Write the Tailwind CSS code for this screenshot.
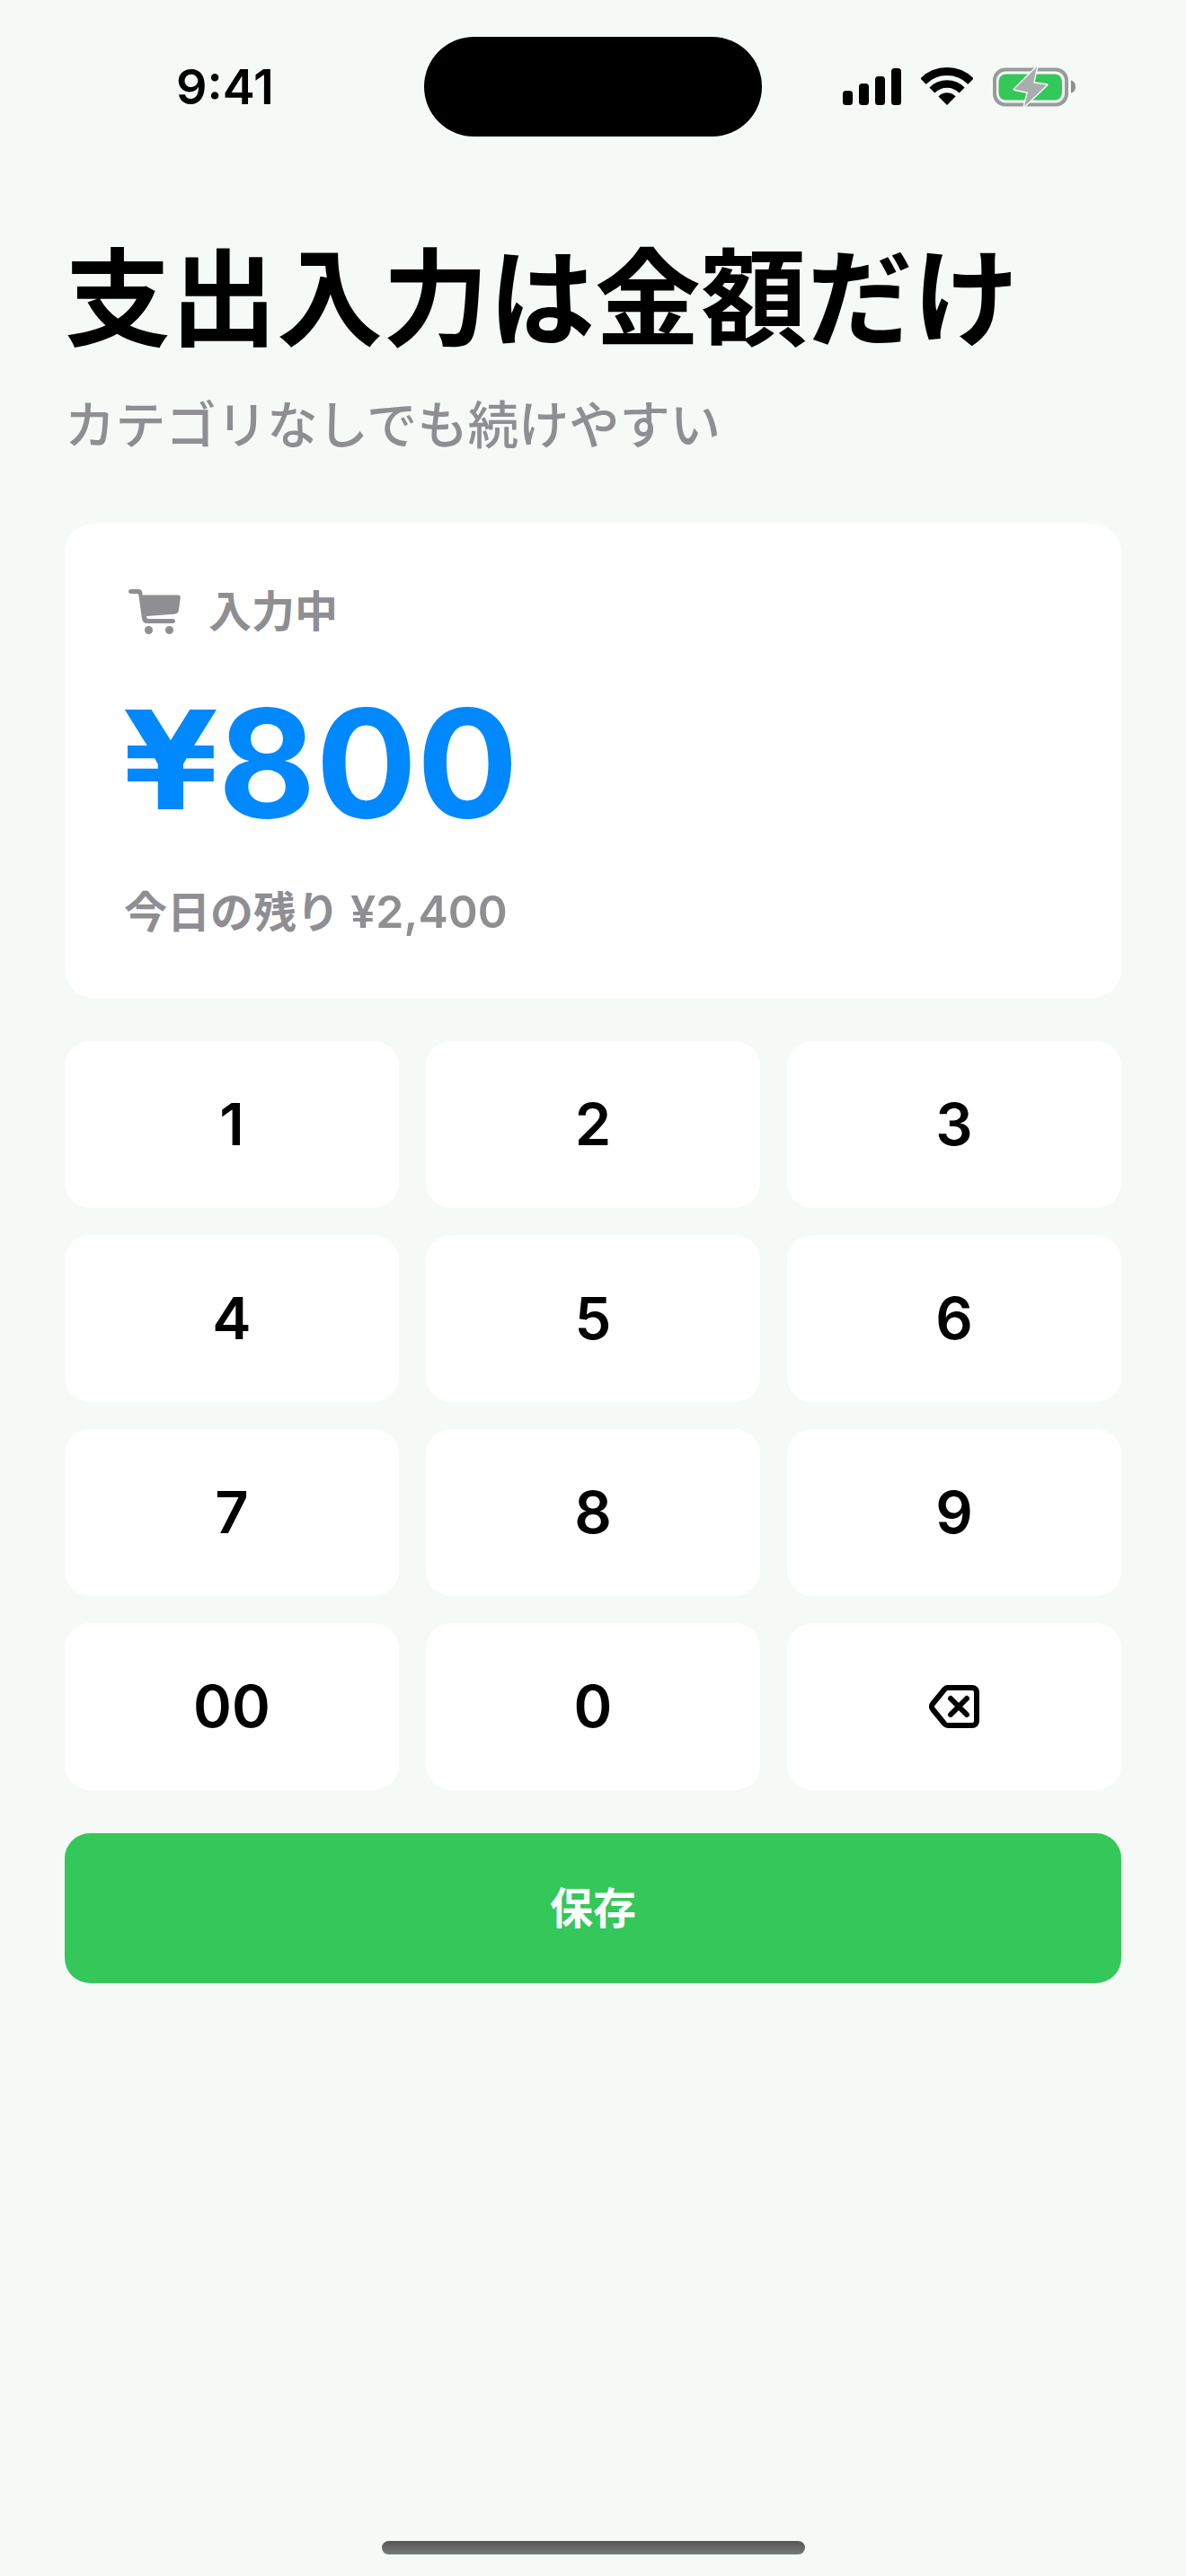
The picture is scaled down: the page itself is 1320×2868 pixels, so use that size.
<!DOCTYPE html>
<html lang="ja">
<head>
    <meta charset="UTF-8">
    <meta name="viewport" content="width=device-width, initial-scale=1.0">
    <title>支出入力</title>
    <script src="https://cdn.jsdelivr.net/npm/@tailwindcss/browser@4"></script>
</head>
<body class="bg-[#f5faf7] text-black font-['Inter','Noto_Sans_CJK_JP',sans-serif]">
<div class="relative w-[1320px] h-[2868px] overflow-hidden">

    <!-- Status bar -->
    <div class="relative h-[152px]">
        <div class="absolute left-[472px] top-[41px] w-[376px] h-[111px] rounded-[56px] bg-black"></div>
        <div class="flex items-start pl-[196px] pr-[122px] pt-[67px]">
            <span class="text-[54px] leading-[60px] font-semibold">9:41</span>
            <div class="ml-auto flex items-start gap-[22px] pt-[8px]">
                <svg width="65" height="42" viewBox="0 0 65 42" class="mt-[1px]">
                    <rect x="0" y="25" width="11" height="16" rx="3.5"/>
                    <rect x="18" y="17" width="11" height="24" rx="3.5"/>
                    <rect x="36" y="9" width="11" height="32" rx="3.5"/>
                    <rect x="54" y="0" width="11" height="41" rx="3.5"/>
                </svg>
                <svg width="58" height="42" viewBox="0 0 58 42">
                    <path d="M2.5 15.5 A37.5 37.5 0 0 1 55.5 15.5" fill="none" stroke="#000" stroke-width="9"/>
                    <path d="M12.4 25.4 A23.5 23.5 0 0 1 45.6 25.4" fill="none" stroke="#000" stroke-width="8.5"/>
                    <path d="M19.5 32.5 A13 13 0 0 1 38.5 32.5 L29 42 Z"/>
                </svg>
                <svg width="93" height="46" viewBox="0 -1.5 93 46" class="-mt-[1px]">
                    <rect x="2" y="2" width="80" height="39" rx="12" fill="none" stroke="#999b9b" stroke-width="4"/>
                    <rect x="6.5" y="7" width="70.5" height="29" rx="8" fill="#34c759"/>
                    <path d="M87 14 C90 14.5 92 17 92 21 C92 25 90 27.5 87 28 Z" fill="#8d8f8f"/>
                    <path d="M49 -1 L24 24 L39 27 L35 43 L60 19 L45 17 Z" fill="#a9adab" stroke="#f5faf7" stroke-width="3" stroke-linejoin="round" paint-order="stroke"/>
                </svg>
            </div>
        </div>
    </div>

    <main class="px-[72px]">
        <h1 class="mt-[121px] text-[118px] leading-[120px] font-bold">支出入力は金額だけ</h1>
        <p class="mt-[49px] text-[56.3px] leading-[64px] font-medium text-[#8e8e93]">カテゴリなしでも続けやすい</p>

        <!-- Amount card -->
        <section class="mt-[77px] h-[528px] rounded-[32px] bg-white pl-[68px] pt-[66px]">
            <div class="flex items-center gap-[31px] h-[64px] pl-[3px]">
                <svg width="58" height="50" viewBox="0 0 58 50" fill="#8e8e93">
                    <path d="M3 0 H11 C13.5 0 15 1.5 15.4 4 L15.7 6.5 H55 C57 6.5 58 7.5 57.8 9.5 L56 23 C55.6 26 54 27.5 51 27.8 L20 30 L20.4 31.5 C20.6 32.6 21.4 33 22.5 33 H49 C51 33 52 34 52 35.5 C52 37 51 38 49 38 H21 C17.5 38 15.5 36 15 33 L11.4 7 C11.2 5.6 10.6 5 9.4 5 H3 C1 5 0 4 0 2.5 C0 1 1 0 3 0 Z"/>
                    <circle cx="22.5" cy="45.5" r="4.5"/>
                    <circle cx="45.5" cy="45.5" r="4.5"/>
                </svg>
                <span class="text-[48px] leading-[64px] font-semibold text-[#8e8e93]">入力中</span>
            </div>
            <div class="mt-[46px] -ml-[3px] h-[180px] flex items-center text-[167px] leading-[180px] font-bold text-[#0088ff]"><span class="font-['DejaVu_Sans'] text-[152px]">¥</span><span>800</span></div>
            <div class="mt-[46px] -ml-[2px] text-[48px] leading-[60px] font-semibold text-[#8e8e93]">今日の残り <span class="text-[50px]">¥2,400</span></div>
        </section>

        <!-- Keypad -->
        <div class="mt-[48px] grid grid-cols-3 gap-[30px] text-[65px] font-semibold">
            <button class="h-[186px] rounded-[28px] bg-white">1</button>
            <button class="h-[186px] rounded-[28px] bg-white">2</button>
            <button class="h-[186px] rounded-[28px] bg-white">3</button>
            <button class="h-[186px] rounded-[28px] bg-white">4</button>
            <button class="h-[186px] rounded-[28px] bg-white">5</button>
            <button class="h-[186px] rounded-[28px] bg-white">6</button>
            <button class="h-[186px] rounded-[28px] bg-white">7</button>
            <button class="h-[186px] rounded-[28px] bg-white">8</button>
            <button class="h-[186px] rounded-[28px] bg-white">9</button>
            <button class="h-[186px] rounded-[28px] bg-white">00</button>
            <button class="h-[186px] rounded-[28px] bg-white">0</button>
            <button class="h-[186px] rounded-[28px] bg-white flex items-center justify-center">
                <svg width="56" height="48" viewBox="0 0 56 48" fill="none" stroke="#000" stroke-width="6" stroke-linecap="round" stroke-linejoin="round">
                    <path d="M21 3 H48 C51 3 53 5 53 8 V40 C53 43 51 45 48 45 H21 C19.5 45 18.5 44.5 17.5 43.5 L4 27 C2.5 25 2.5 23 4 21 L17.5 4.5 C18.5 3.5 19.5 3 21 3 Z"/>
                    <path d="M24 15 L42 33 M42 15 L24 33"/>
                </svg>
            </button>
        </div>

        <button class="mt-[48px] w-full h-[167px] rounded-[28px] bg-[#34c759] text-white text-[48px] font-bold">保存</button>
    </main>

    <!-- Home indicator -->
    <div class="absolute left-[425px] top-[2829px] w-[471px] h-[15px] rounded-full bg-gradient-to-b from-[#555555] to-[#777a78]"></div>
</div>
</body>
</html>
